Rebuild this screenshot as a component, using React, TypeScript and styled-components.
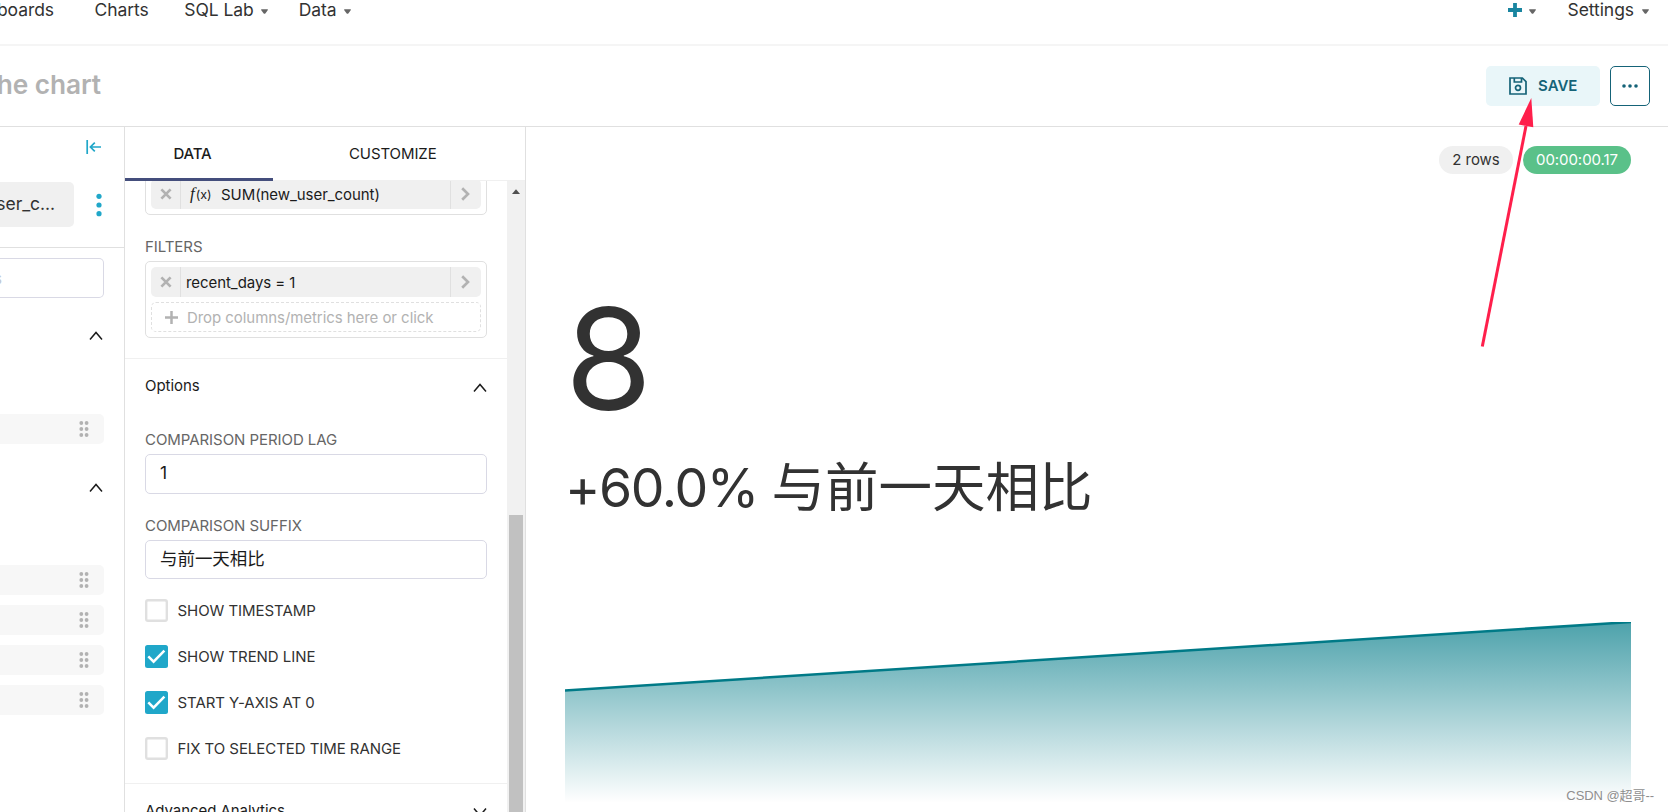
import styled, { createGlobalStyle } from "styled-components";

const GlobalStyle = createGlobalStyle`
  * { box-sizing: border-box; }
  body {
    margin: 0;
    background: #fff;
    color: #323232;
    font-family: Inter, "Noto Sans CJK SC", sans-serif;
    font-size: 15px;
    letter-spacing: -0.06px;
    overflow: hidden;
  }
`;

const metricColumns = ["metric"];
const tableColumns = ["ds", "recent_days", "new_user_count", "channel"];

const controls = [
    { label: "SHOW TIMESTAMP", checked: false },
    { label: "SHOW TREND LINE", checked: true },
    { label: "START Y-AXIS AT 0", checked: true },
    { label: "FIX TO SELECTED TIME RANGE", checked: false },
];

const Caret = () => (
    <svg width="7" height="5" viewBox="0 0 7 5"><path d="M0.6 0.2h5.8q.7 0 .5.9L4.3 4.5q-.8.7-1.6 0L.1 1.1Q-.1.2.6.2z" fill="#666" /></svg>
);

const Chevron = ({ down = false }: { down?: boolean }) => (
    <svg width="14" height="9" viewBox="0 0 14 9" fill="none" stroke="#1b1b1b" strokeWidth="1.5">
        <path d={down ? "M1 .6 7 7.6 13 .6" : "M1 8.4 7 1.4 13 8.4"} />
    </svg>
);

const Grip = () => (
    <svg width="10" height="16" viewBox="0 0 10 16" fill="#b2b2b2">
        {[2, 8, 14].map((y) => [2.3, 7.6].map((x) => <circle key={`${x}-${y}`} cx={x} cy={y} r="1.9" />))}
    </svg>
);

const Cross = () => (
    <svg width="12" height="12" viewBox="0 0 12 12" stroke="#b2b2b2" strokeWidth="2.7"><path d="M1.4 1.4 10.6 10.6M10.6 1.4 1.4 10.6" /></svg>
);

const Next = () => (
    <svg width="9" height="14" viewBox="0 0 9 14" fill="none" stroke="#b2b2b2" strokeWidth="2.7"><path d="M1.2 1.2 7 7 1.2 12.8" /></svg>
);

const CheckIcon = ({ checked }: { checked: boolean }) => (
    <svg width="23" height="23" viewBox="0 0 23 23">
        {checked ? (
            <>
                <rect width="23" height="23" rx="2.5" fill="#20a7c9" />
                <path d="M3.3 11.4 8.6 16.7 19.4 5.7" fill="none" stroke="#fff" strokeWidth="2.5" />
            </>
        ) : (
            <rect x="1.2" y="1.2" width="20.6" height="20.6" rx="1.8" fill="#fff" stroke="#e0e0e0" strokeWidth="2.4" />
        )}
    </svg>
);

const SaveIcon = () => (
    <svg width="18" height="18" viewBox="0 0 18 18" fill="none" stroke="#156378" strokeWidth="1.7">
        <path d="M1 1h12.4L17 4.6V17H1zM5.3 1v4h7.2V1" />
        <circle cx="9" cy="10.8" r="2.5" />
    </svg>
);

const Metric = ({ label, fn = false }: { label: string; fn?: boolean }) => (
    <Pill>
        <PillClose><Cross /></PillClose>
        <PillLabel $fn={fn}>
            {fn && <Fn><i>f</i>(x)</Fn>}
            {label}
        </PillLabel>
        <PillNext><Next /></PillNext>
    </Pill>
);

const App = () => (
    <Page>
        <GlobalStyle />
        <NavBar>
            <NavClip>boards</NavClip>
            <NavItem $left={40.5}>Charts</NavItem>
            <NavItem $left={35.5}>SQL Lab <Caret /></NavItem>
            <NavItem $left={30.5}>Data <Caret /></NavItem>
            <NavRight>
                <svg width="14" height="14" viewBox="0 0 14 14" stroke="#1985a0" strokeWidth="3.8"><path d="M7 0V14M0 7H14" /></svg>
                <Caret />
                <NavItem $left={31}>Settings <Caret /></NavItem>
            </NavRight>
        </NavBar>
        <Header>
            <Title>he chart</Title>
            <SaveButton><SaveIcon />SAVE</SaveButton>
            <MoreButton>
                <svg width="16" height="4" viewBox="0 0 16 4" fill="#156378"><circle cx="2" cy="2" r="1.8" /><circle cx="8" cy="2" r="1.8" /><circle cx="14" cy="2" r="1.8" /></svg>
            </MoreButton>
        </Header>
        <Body>
            <Source>
                <CollapseRow>
                    <svg width="15" height="14" viewBox="0 0 15 14" fill="none" stroke="#20a7c9" strokeWidth="1.7">
                        <path d="M1.2 0V14M4.6 7H15M8.8 2.6 4.4 7 8.8 11.4" />
                    </svg>
                </CollapseRow>
                <DatasetRow>
                    <Dataset>ser_c...</Dataset>
                    <svg width="6" height="24" viewBox="0 0 6 24" fill="#20a7c9"><circle cx="3" cy="3.3" r="2.6" /><circle cx="3" cy="12" r="2.6" /><circle cx="3" cy="20.7" r="2.6" /></svg>
                </DatasetRow>
                <Search>s</Search>
                <GroupHead $top={33}><Chevron /></GroupHead>
                {metricColumns.map((c) => <Column key={c}><Grip /></Column>)}
                <GroupHead $top={29}><Chevron /></GroupHead>
                {tableColumns.map((c) => <Column key={c}><Grip /></Column>)}
            </Source>
            <Panel>
                <Tabs>
                    <Tab $active>DATA</Tab>
                    <Tab>CUSTOMIZE</Tab>
                </Tabs>
                <Scroller>
                    <Controls>
                        <Section>
                            <DropBox $cut>
                                <Metric fn label="SUM(new_user_count)" />
                            </DropBox>
                            <Label>FILTERS</Label>
                            <DropBox>
                                <Metric label="recent_days = 1" />
                                <DropHint>
                                    <svg width="13" height="13" viewBox="0 0 13 13" stroke="#b2b2b2" strokeWidth="2.5"><path d="M6.5 0V13M0 6.5H13" /></svg>
                                    Drop columns/metrics here or click
                                </DropHint>
                            </DropBox>
                        </Section>
                        <Section>
                            <SectionHead>Options<Chevron /></SectionHead>
                            <Label $first>COMPARISON PERIOD LAG</Label>
                            <Field>1</Field>
                            <Label>COMPARISON SUFFIX</Label>
                            <Field>与前一天相比</Field>
                            <Checks>
                                {controls.map((c) => (
                                    <Check key={c.label}><CheckIcon checked={c.checked} />{c.label}</Check>
                                ))}
                            </Checks>
                        </Section>
                        <SectionHead>Advanced Analytics<Chevron down /></SectionHead>
                    </Controls>
                    <ScrollTrack>
                        <svg width="8" height="5" viewBox="0 0 8 5"><path d="M0 5 4 .3 8 5z" fill="#505050" /></svg>
                        <Thumb />
                    </ScrollTrack>
                </Scroller>
            </Panel>
            <ChartArea>
                <Badges>
                    <Badge>2 rows</Badge>
                    <Badge $green>00:00:00.17</Badge>
                </Badges>
                <BigNumber>8</BigNumber>
                <SubHeader><Percent>+60.0% </Percent>与前一天相比</SubHeader>
                <Trend viewBox="0 0 1066 181">
                    <defs>
                        <linearGradient id="trend" x1="0" y1="0" x2="0" y2="181" gradientUnits="userSpaceOnUse">
                            <stop offset="0" stopColor="#007a87" stopOpacity="0.7" />
                            <stop offset="1" stopColor="#007a87" stopOpacity="0" />
                        </linearGradient>
                    </defs>
                    <path d="M0 68.5 1066 0V181H0z" fill="url(#trend)" />
                    <path d="M0 68.5 1066 0" fill="none" stroke="#007a87" strokeWidth="2.5" />
                </Trend>
            </ChartArea>
        </Body>
        <Arrow viewBox="0 0 60 260">
            <path d="M12.3 248.5 56 28" stroke="#ff1f4b" strokeWidth="3" />
            <path d="M61.3 0 48.7 26.5 63.3 29.3z" fill="#ff1f4b" />
        </Arrow>
        <Watermark>CSDN @超哥--</Watermark>
    </Page>
);

export default App;

const Page = styled.div`
  width: 1668px;
  height: 812px;
  display: flex;
  flex-direction: column;
  overflow: hidden;
`;

const NavBar = styled.nav`
  height: 46px;
  flex: none;
  display: flex;
  border-bottom: 2px solid #f5f5f5;
  font-size: 17.5px;
  line-height: 20px;
`;

const NavClip = styled.div`
  width: 54px;
  display: flex;
  justify-content: flex-end;
  overflow: hidden;
`;

const NavItem = styled.div<{ $left: number }>`
  display: flex;
  align-items: center;
  height: 20px;
  gap: 7.5px;
  margin-left: ${(p) => p.$left}px;
  svg { margin-top: 3px; }
`;

const NavRight = styled.div`
  margin-left: auto;
  padding-right: 19.5px;
  height: 20px;
  display: flex;
  align-items: center;
  > svg:first-child { margin-top: -1px; }
  > svg + svg { margin: 3px 0 0 7px; }
`;

const Header = styled.header`
  height: 81px;
  flex: none;
  display: flex;
  align-items: center;
  gap: 10px;
  padding-right: 18px;
  border-bottom: 1px solid #e0e0e0;
`;

const Title = styled.div`
  width: 101px;
  margin-right: auto;
  padding-bottom: 2px;
  display: flex;
  justify-content: flex-end;
  white-space: nowrap;
  font-size: 26.25px;
  font-weight: 600;
  line-height: 32px;
  color: #b2b2b2;
`;

const SaveButton = styled.button`
  width: 114px;
  height: 40px;
  padding: 0 0 1px;
  display: flex;
  align-items: center;
  justify-content: center;
  gap: 11.5px;
  border: 0;
  border-radius: 5px;
  background: #e9f6f9;
  color: #156378;
  font: 600 15px Inter, sans-serif;
`;

const MoreButton = styled(SaveButton)`
  width: 40px;
  border: 1px solid #156378;
  background: #fff;
`;

const Body = styled.div`
  flex: 1;
  min-height: 0;
  display: flex;
`;

const Source = styled.aside`
  width: 125px;
  flex: none;
  border-right: 1px solid #e0e0e0;
`;

const CollapseRow = styled.div`
  height: 55px;
  padding: 13px 23px 0 0;
  display: flex;
  justify-content: flex-end;
  align-items: flex-start;
`;

const DatasetRow = styled.div`
  height: 66px;
  display: flex;
  border-bottom: 1px solid #e0e0e0;
  svg { margin: 11px 0 0 22px; }
`;

const Dataset = styled.div`
  width: 74px;
  height: 45px;
  padding: 0 19px 2px 0;
  display: flex;
  align-items: center;
  justify-content: flex-end;
  overflow: hidden;
  border-radius: 0 5px 5px 0;
  background: #f0f0f0;
  font-size: 17.5px;
`;

const Search = styled.div`
  width: 104px;
  height: 40px;
  margin-top: 10px;
  display: flex;
  align-items: center;
  border: 1px solid #d9d9e5;
  border-left: 0;
  border-radius: 0 5px 5px 0;
  color: #c0c8d4;
  font-size: 15px;
  text-indent: -6px;
  overflow: hidden;
`;

const GroupHead = styled.div<{ $top: number }>`
  height: 111px;
  padding: ${(p) => p.$top}px 21px 0 0;
  display: flex;
  align-items: flex-start;
  justify-content: flex-end;
  &:nth-child(4) { height: 116px; }
`;

const Column = styled.div`
  width: 104px;
  height: 30px;
  margin-bottom: 10px;
  padding-right: 15px;
  display: flex;
  align-items: center;
  justify-content: flex-end;
  border-radius: 0 5px 5px 0;
  background: #f7f7f7;
`;

const Panel = styled.section`
  width: 401px;
  flex: none;
  display: flex;
  flex-direction: column;
  border-right: 1px solid #e0e0e0;
`;

const Tabs = styled.div`
  height: 54px;
  flex: none;
  display: flex;
  border-bottom: 1px solid #f0f0f0;
`;

const Tab = styled.div<{ $active?: boolean }>`
  height: 54px;
  width: ${(p) => (p.$active ? 148 : 252)}px;
  padding-left: ${(p) => (p.$active ? 48.5 : 76)}px;
  line-height: 53px;
  color: #1b1b1b;
  font-weight: ${(p) => (p.$active ? 500 : 400)};
  letter-spacing: ${(p) => (p.$active ? -0.2 : -0.1)}px;
  border-bottom: ${(p) => (p.$active ? "3px solid #444e7c" : "0")};
`;

const Scroller = styled.div`
  flex: 1;
  min-height: 0;
  display: flex;
  overflow: hidden;
`;

const Controls = styled.div`
  width: 382px;
`;

const Section = styled.div`
  padding: 0 20px 20px;
  border-bottom: 1px solid #f0f0f0;
  & + & { padding: 0 0 23px; }
  & + & > :not(:first-child) { margin-left: 20px; margin-right: 20px; }
`;

const DropBox = styled.div<{ $cut?: boolean }>`
  display: flex;
  flex-direction: column;
  gap: 5px;
  padding: 5px;
  border: 1px solid #e0e0e0;
  border-radius: 5px;
  margin-top: ${(p) => (p.$cut ? -8 : 0)}px;
`;

const Pill = styled.div`
  height: 30px;
  display: flex;
  border-radius: 5px;
  background: #f0f0f0;
  color: #1b1b1b;
`;

const PillClose = styled.div`
  width: 30px;
  display: flex;
  align-items: center;
  justify-content: center;
  border-right: 1px solid #e0e0e0;
`;

const PillNext = styled(PillClose)`
  width: 31px;
  padding-right: 1px;
  border-right: 0;
  border-left: 1px solid #e0e0e0;
`;

const PillLabel = styled.div<{ $fn: boolean }>`
  flex: 1;
  display: flex;
  padding-left: ${(p) => (p.$fn ? 9 : 5)}px;
  line-height: 32px;
`;

const Fn = styled.span`
  width: 31px;
  font-size: 12.5px;
  line-height: 30px;
  i { font: italic 17px/30px "Liberation Serif", serif; margin-right: 1px; }
`;

const DropHint = styled.div`
  height: 30px;
  padding-left: 13px;
  display: flex;
  align-items: center;
  gap: 9px;
  border: 1px dashed #e0e0e0;
  border-radius: 5px;
  color: #b2b2b2;
`;

const Label = styled.div<{ $first?: boolean }>`
  margin-top: ${(p) => (p.$first ? 1 : 22)}px;
  margin-bottom: 4px;
  line-height: 20px;
  color: #666;
`;

const SectionHead = styled.div`
  height: 70px;
  padding: 16px 20px 0;
  display: flex;
  justify-content: space-between;
  line-height: 21px;
  color: #1b1b1b;
  svg { margin-top: 8px; }
`;

const Field = styled.div`
  height: 39.5px;
  padding: 0 0 1px 14px;
  display: flex;
  align-items: center;
  border: 1px solid #d9d9e5;
  border-radius: 5px;
  font-size: 17.5px;
  line-height: 20px;
  color: #1b1b1b;
`;

const Checks = styled.div`
  margin-top: 20px;
  display: flex;
  flex-direction: column;
  gap: 23px;
`;

const Check = styled.div`
  height: 23px;
  display: flex;
  align-items: center;
  gap: 9.5px;
`;

const ScrollTrack = styled.div`
  width: 18px;
  padding-top: 8px;
  display: flex;
  flex-direction: column;
  align-items: center;
  background: #f1f1f1;
`;

const Thumb = styled.div`
  width: 14px;
  margin-top: 321px;
  flex: 1;
  background: #c1c1c1;
`;

const ChartArea = styled.main`
  flex: 1;
  padding: 19px 37px 0 39px;
  color: #323232;
`;

const Badges = styled.div`
  display: flex;
  justify-content: flex-end;
  gap: 10px;
`;

const Badge = styled.div<{ $green?: boolean }>`
  width: ${(p) => (p.$green ? 108 : 74)}px;
  height: 28px;
  line-height: 27px;
  text-align: center;
  border-radius: 14px;
  background: ${(p) => (p.$green ? "#5ac189" : "#f0f0f0")};
  color: ${(p) => (p.$green ? "#fff" : "#323232")};
`;

const BigNumber = styled.div`
  margin-top: 114px;
  font-size: 141px;
  line-height: 142px;
`;

const SubHeader = styled.div`
  margin-top: 25px;
  margin-bottom: 101px;
  font-size: 53.5px;
  line-height: 66px;
  letter-spacing: 0;
  white-space: nowrap;
`;

const Percent = styled.span`
  letter-spacing: -1.4px;
`;

const Trend = styled.svg`
  display: block;
  width: 1066px;
  height: 181px;
`;

const Arrow = styled.svg`
  position: absolute;
  left: 1470px;
  top: 97.5px;
  width: 60px;
  height: 260px;
  overflow: visible;
`;

const Watermark = styled.div`
  position: absolute;
  right: 14px;
  bottom: 6px;
  font: 13px/20px "Liberation Sans", "Noto Sans CJK SC", sans-serif;
  color: #8f8f8f;
  text-shadow: 1px 1px 0 #fff;
`;
